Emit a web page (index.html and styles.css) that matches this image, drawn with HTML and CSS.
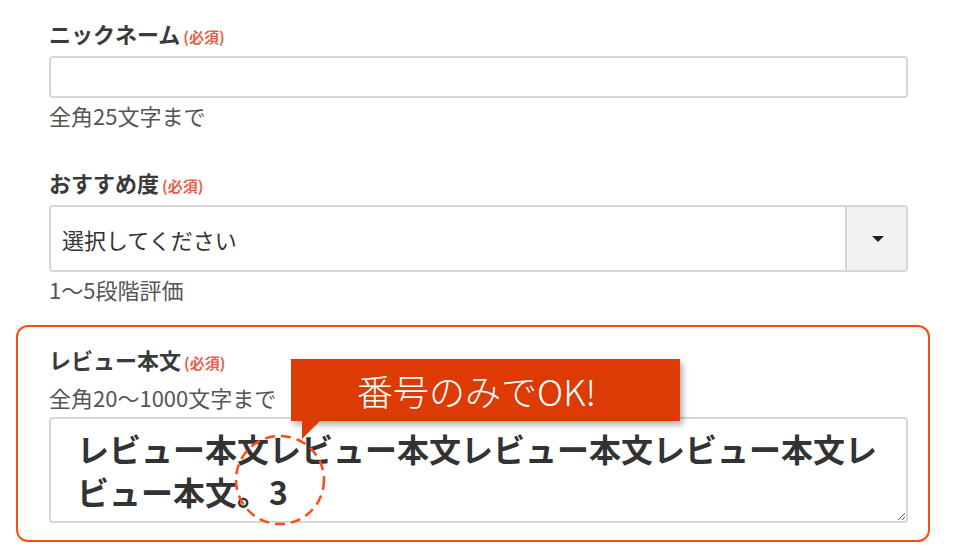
FILE: index.html
```html
<!DOCTYPE html>
<html lang="ja">
<head>
    <meta charset="UTF-8">
    <title>レビュー投稿フォーム</title>
    <meta name="viewport" content="width=device-width, initial-scale=1.0">
    <link rel="stylesheet" href="styles.css">
</head>
<body>
    <form class="review-form">
        <div class="field">
            <label class="label" for="nickname">ニックネーム<span class="required">(必須)</span></label>
            <input type="text" id="nickname" class="text-input">
            <p class="note">全角25文字まで</p>
        </div>
        <div class="field">
            <label class="label" for="rating">おすすめ度<span class="required">(必須)</span></label>
            <div class="select">
                <select id="rating">
                    <option>選択してください</option>
                    <option>1</option>
                    <option>2</option>
                    <option>3</option>
                    <option>4</option>
                    <option>5</option>
                </select>
                <span class="select-arrow"></span>
            </div>
            <p class="note">1～5段階評価</p>
        </div>
        <div class="field highlight">
            <label class="label" for="body">レビュー本文<span class="required">(必須)</span></label>
            <p class="note">全角20～1000文字まで</p>
            <textarea id="body" class="text-area">レビュー本文レビュー本文レビュー本文レビュー本文レビュー本文。3</textarea>
            <div class="callout">番号のみでOK!</div>
            <svg class="marker" width="92" height="92" viewBox="0 0 92 92">
                <circle cx="46" cy="46" r="44" fill="none" stroke="#ff4a14" stroke-width="2.5" stroke-dasharray="10 6"/>
            </svg>
        </div>
    </form>
</body>
</html>
```

FILE: styles.css
```css
* {
    margin: 0;
    padding: 0;
    box-sizing: border-box;
}
body {
    font-family: "Noto Sans CJK JP", "Noto Sans", sans-serif;
    color: #333;
    background: #fff;
}
.review-form {
    padding: 18px 52px 0 49px;
}
.field {
    margin-bottom: 37px;
}
.label {
    display: block;
    font-size: 22px;
    font-weight: bold;
    line-height: 30px;
    margin-bottom: 4px;
    color: #3a3a3a;
}
.required {
    font-size: 15px;
    color: #e8604c;
    margin-left: 3px;
}
.note {
    font-size: 22px;
    line-height: 30px;
    margin-top: 2px;
    color: #555;
}
.text-input {
    display: block;
    width: 100%;
    height: 42px;
    border: 2px solid #d6d6d6;
    border-radius: 4px;
    font-family: inherit;
    font-size: 22px;
    padding: 0 12px;
}
.select {
    display: flex;
    height: 67px;
    border: 2px solid #d6d6d6;
    border-radius: 4px;
    overflow: hidden;
}
.select select {
    flex: 1;
    appearance: none;
    -webkit-appearance: none;
    border: none;
    background: #fff;
    font-family: inherit;
    font-size: 22px;
    color: #333;
    padding: 0 11px;
    outline: none;
}
.select-arrow {
    width: 61px;
    background: #f2f2f2;
    border-left: 2px solid #d6d6d6;
    display: flex;
    align-items: center;
    justify-content: center;
}
.select-arrow::before {
    content: "";
    border-top: 6px solid #222;
    border-left: 6px solid transparent;
    border-right: 6px solid transparent;
    margin-left: 2px;
}
.highlight {
    position: relative;
    margin: -16px -22px 0 -33px;
    padding: 17px 20px 17px 31px;
    border: 2px solid #ff4a14;
    border-radius: 12px;
}
.highlight .note {
    margin-top: 4px;
    margin-bottom: 5px;
}
.text-area {
    display: block;
    width: 100%;
    height: 106px;
    border: 2px solid #d6d6d6;
    border-radius: 4px;
    padding: 8px 26px 0 26px;
    font-family: inherit;
    font-size: 32px;
    font-weight: bold;
    line-height: 43px;
    color: #333;
    resize: vertical;
    overflow: hidden;
}
.callout {
    position: absolute;
    left: 273px;
    top: 32px;
    width: 389px;
    height: 62px;
    padding-left: 66px;
    background: #dc3b05;
    color: #fff;
    font-size: 36px;
    font-weight: 300;
    line-height: 62px;
    box-shadow: 3px 4px 6px rgba(0, 0, 0, 0.3);
}
.callout::after {
    content: "";
    position: absolute;
    left: 11px;
    top: 100%;
    border-top: 18px solid #dc3b05;
    border-right: 18px solid transparent;
}
.marker {
    position: absolute;
    left: 216px;
    top: 107px;
}
```
